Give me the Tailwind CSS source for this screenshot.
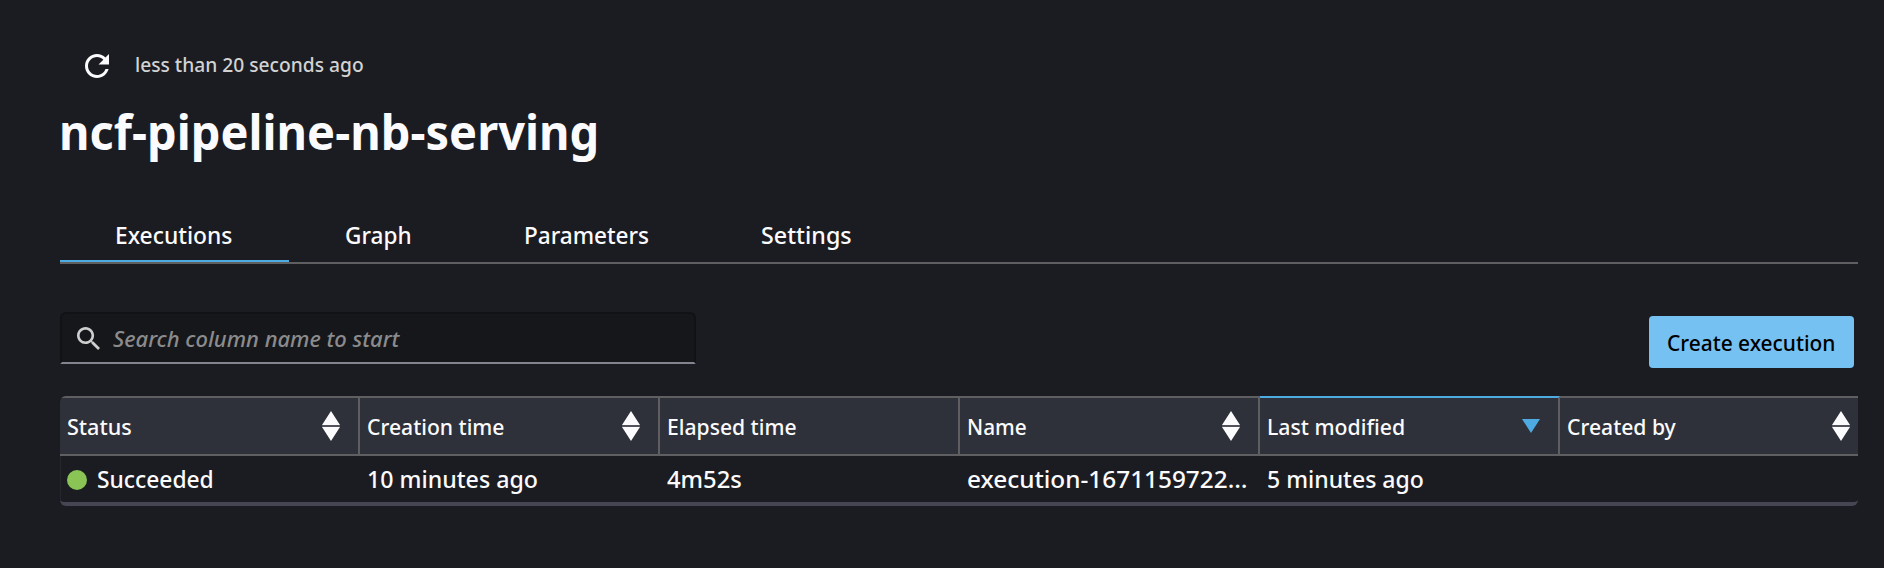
<!DOCTYPE html>
<html lang="en">
<head>
<meta charset="utf-8">
<title>ncf-pipeline-nb-serving</title>
<script src="https://cdn.jsdelivr.net/npm/@tailwindcss/browser@4"></script>
</head>
<body class="h-[568px] overflow-hidden bg-[#1b1c21] pl-[60px] pr-[26px] font-['Noto_Sans',sans-serif] font-medium text-[#fbfbfd]">
<svg class="hidden">
  <symbol id="sort" viewBox="0 0 18 30"><path fill="#fbfbfd" d="M9 0l9 14H0zM0 16h18L9 30z"/><path fill="#77747f" d="M0 14.4h18v1H0z"/></symbol>
</svg>

<header>
  <div class="flex h-[99px] items-start pl-[25px] pt-[54px]">
    <svg class="size-6 shrink-0" viewBox="4 4 16 16" fill="#fbfbfd"><path d="M17.65 6.35C16.2 4.9 14.21 4 12 4c-4.42 0-7.99 3.58-7.99 8s3.57 8 7.99 8c3.73 0 6.84-2.55 7.73-6h-2.08c-.82 2.33-3.04 4-5.65 4-3.31 0-6-2.69-6-6s2.69-6 6-6c1.66 0 3.14.69 4.22 1.78L13 11h7V4l-2.35 2.35z"/></svg>
    <span class="ml-[26px] inline-block origin-left scale-x-[.96] whitespace-nowrap text-[20px] leading-[22px] text-[#d2d2d3]">less than 20 seconds ago</span>
  </div>
  <h1 class="-ml-px h-[96px] pt-[9px]"><span class="inline-block origin-left scale-x-[.979] whitespace-nowrap text-[48px] font-bold leading-[48px]">ncf-pipeline-nb-serving</span></h1>
</header>

<nav class="flex h-[69px] items-stretch border-b-2 border-[#5f5f61] text-[24px] leading-[30px]">
  <div class="w-[229px] border-b-2 border-[#4dabe2] pl-[55px] pt-[25px]"><span class="inline-block origin-left scale-x-[.95]">Executions</span></div>
  <div class="w-[179px] pl-[56px] pt-[25px]"><span class="inline-block origin-left scale-x-[.94]">Graph</span></div>
  <div class="w-[237px] pl-[56px] pt-[25px]"><span class="inline-block origin-left scale-x-[.94]">Parameters</span></div>
  <div class="pl-[56px] pt-[25px]"><span class="inline-block origin-left scale-x-[.97]">Settings</span></div>
</nav>

<div class="flex h-[132px] items-start justify-between pr-1 pt-[48px]">
  <div class="flex h-[52px] w-[636px] items-center rounded-t-md border-2 border-[#111215] border-b-[#84838f] bg-[#16171a] pl-[15px]">
    <svg class="size-[23px] shrink-0" viewBox="3 3 17.49 17.49" fill="#cfcfd0"><path d="M15.5 14h-.79l-.28-.27C15.41 12.59 16 11.11 16 9.5 16 5.91 13.09 3 9.5 3S3 5.91 3 9.5 5.91 16 9.5 16c1.61 0 3.09-.59 4.23-1.57l.27.28v.79l5 4.99L20.49 19l-4.99-5zm-6 0C7.01 14 5 11.99 5 9.5S7.01 5 9.5 5 14 7.01 14 9.5 11.99 14 9.5 14z"/></svg>
    <span class="ml-[13px] inline-block origin-left scale-x-[.997] whitespace-nowrap text-[22px] italic leading-none text-[#8b8b8d]">Search column name to start</span>
  </div>
  <button class="mt-1 flex h-[52px] w-[205px] items-center rounded bg-[#75c1f2] pl-[18px] text-[22px] leading-none text-black"><span class="inline-block origin-left scale-x-[.95] whitespace-nowrap">Create execution</span></button>
</div>

<section class="h-[110px] overflow-hidden rounded-l-md rounded-br-md border-b-4 border-[#464553]">
  <div class="grid h-[60px] grid-cols-[300px_300px_300px_300px_300px_298px] border-b-2 border-[#5f5f61] bg-[#2f313a] text-[22px] leading-none">
    <div class="flex items-center justify-between border-r-2 border-t-2 border-[#5f5f61] pl-[7px] pr-[18px]"><span class="origin-left scale-x-[.98]">Status</span><svg class="h-[30px] w-[18px]"><use href="#sort"/></svg></div>
    <div class="flex items-center justify-between border-r-2 border-t-2 border-[#5f5f61] pl-[7px] pr-[18px]"><span class="origin-left scale-x-[.96]">Creation time</span><svg class="h-[30px] w-[18px]"><use href="#sort"/></svg></div>
    <div class="flex items-center justify-between border-r-2 border-t-2 border-[#5f5f61] pl-[7px] pr-[18px]"><span class="origin-left scale-x-[.96]">Elapsed time</span></div>
    <div class="flex items-center justify-between border-r-2 border-t-2 border-[#5f5f61] pl-[7px] pr-[18px]"><span class="origin-left scale-x-[.945]">Name</span><svg class="h-[30px] w-[18px]"><use href="#sort"/></svg></div>
    <div class="flex items-center justify-between border-r-2 border-t-2 border-r-[#5f5f61] border-t-[#4dabe2] pl-[7px] pr-[18px]"><span class="origin-left scale-x-[.965]">Last modified</span><svg class="h-[14px] w-[18px]" viewBox="0 0 18 14"><path fill="#4dabe2" d="M0 0h18L9 14z"/></svg></div>
    <div class="flex items-center justify-between border-t-2 border-[#5f5f61] pl-[7px] pr-2"><span class="origin-left scale-x-[.96]">Created by</span><svg class="h-[30px] w-[18px]"><use href="#sort"/></svg></div>
  </div>
  <div class="grid h-[46px] grid-cols-[300px_300px_300px_300px_300px_298px] items-center border-l border-[#25262d] text-[24px] leading-none whitespace-nowrap">
    <div class="flex items-center pl-[6px]"><span class="mt-[2px] size-5 rounded-full bg-[#89c454]"></span><span class="ml-[10px] inline-block origin-left scale-x-[.95]">Succeeded</span></div>
    <div class="pl-[6px]"><span class="inline-block origin-left scale-x-[.965]">10 minutes ago</span></div>
    <div class="pl-[6px]"><span class="inline-block origin-left scale-x-[.99]">4m52s</span></div>
    <div class="pl-[6px]"><span class="inline-block origin-left scale-x-[1.015]">execution-1671159722…</span></div>
    <div class="pl-[6px]"><span class="inline-block origin-left scale-x-[.96]">5 minutes ago</span></div>
    <div></div>
  </div>
</section>
</body>
</html>
